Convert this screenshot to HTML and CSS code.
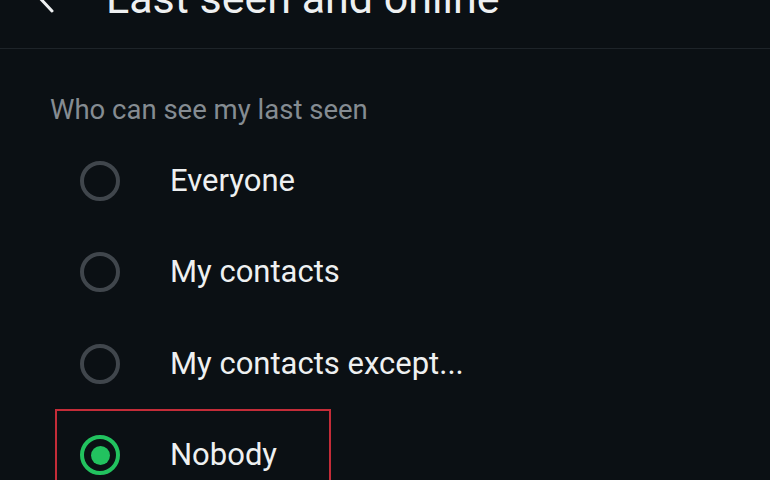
FILE: index.html
```html
<!DOCTYPE html>
<html lang="en">
<head>
    <meta charset="UTF-8">
    <meta name="viewport" content="width=device-width, initial-scale=1.0">
    <title>Last seen and online</title>
    <link rel="stylesheet" href="styles.css">
</head>
<body>
    <header class="appbar">
        <div class="appbar-row">
            <svg class="back" width="24" height="34" viewBox="0 0 24 34">
                <polyline points="18,2 4,17 18,32" fill="none" stroke="#eef0f1" stroke-width="3" stroke-linecap="round" stroke-linejoin="round"/>
            </svg>
            <h1>Last seen and online</h1>
        </div>
    </header>
    <main class="section">
        <p class="section-title">Who can see my last seen</p>
        <div class="options">
            <div class="option"><span class="radio"></span><span class="label">Everyone</span></div>
            <div class="option"><span class="radio"></span><span class="label">My contacts</span></div>
            <div class="option"><span class="radio"></span><span class="label">My contacts except...</span></div>
            <div class="option marked"><span class="radio checked"></span><span class="label">Nobody</span></div>
        </div>
    </main>
</body>
</html>
```

FILE: styles.css
```css
body {
    margin: 0;
    background-color: #0b1014;
    font-family: Roboto, "Liberation Sans", sans-serif;
    color: #eef0f1;
    height: 480px;
    overflow: hidden;
}
.appbar {
    height: 48px;
    border-bottom: 1px solid #1e2429;
    overflow: hidden;
}
.appbar-row {
    display: flex;
    align-items: center;
    height: 56px;
    margin-top: -32px;
}
.back {
    margin-left: 34px;
    flex-shrink: 0;
}
.appbar h1 {
    margin: 4px 0 0 48px;
    font-size: 43px;
    font-weight: 400;
    line-height: 48px;
    white-space: nowrap;
}
.section {
    padding-top: 45px;
}
.section-title {
    margin: 0 0 10px 50px;
    font-size: 27.5px;
    line-height: 31px;
    color: #858c92;
}
.options {
    padding-left: 55px;
}
.option {
    position: relative;
    display: flex;
    align-items: center;
    height: 91.5px;
    padding-left: 25px;
}
.radio {
    box-sizing: border-box;
    width: 40px;
    height: 40px;
    border: 4px solid #40464c;
    border-radius: 50%;
    display: flex;
    align-items: center;
    justify-content: center;
    flex-shrink: 0;
}
.radio.checked {
    border-color: #22c25f;
}
.radio.checked::before {
    content: '';
    width: 19px;
    height: 19px;
    border-radius: 50%;
    background-color: #22c25f;
}
.label {
    margin-left: 50px;
    font-size: 31px;
    line-height: 40px;
}
.marked::after {
    content: '';
    position: absolute;
    top: -1px;
    left: 0;
    width: 276px;
    height: 120px;
    box-sizing: border-box;
    border: 2px solid #c42c38;
}
```
